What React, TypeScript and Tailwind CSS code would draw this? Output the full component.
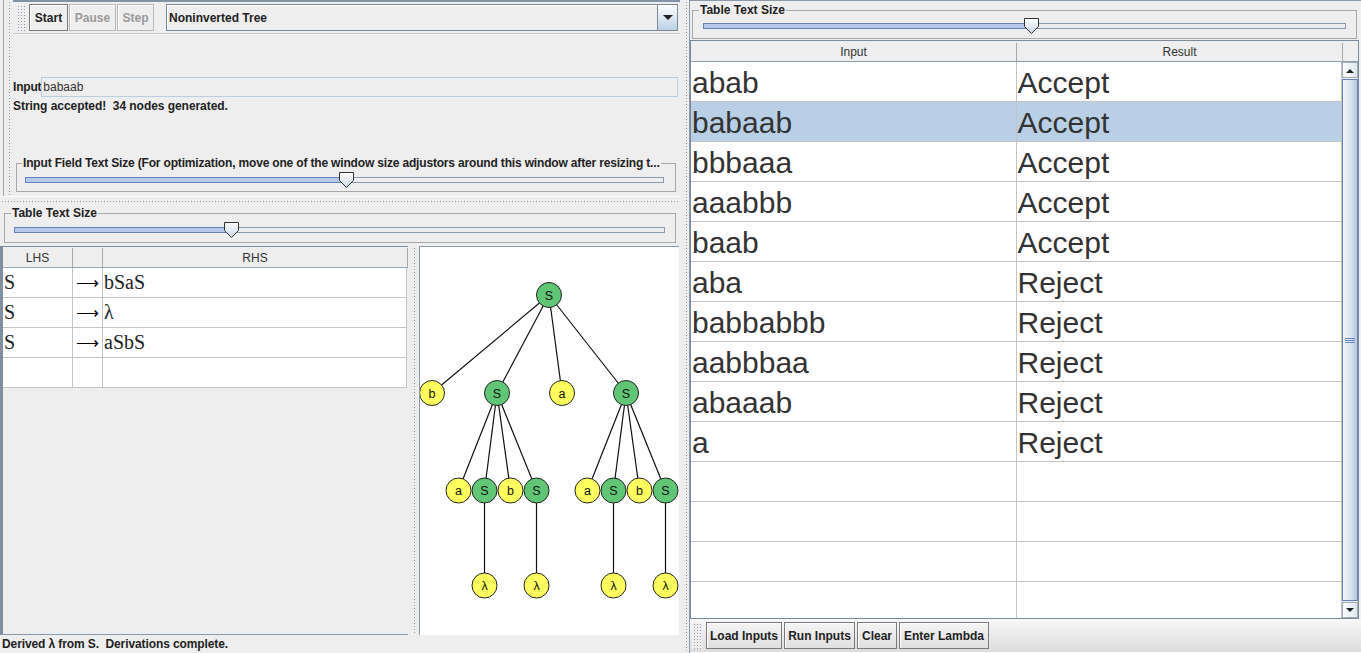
const DOTS =
  "bg-[#eeeeee] bg-[image:linear-gradient(90deg,#eeeeee_2px,transparent_2px),linear-gradient(#eeeeee_2px,#8e9cab_2px)] bg-[length:3px_3px]";

function Thumb() {
  return (
    <svg width="15" height="16" viewBox="0 0 15 16">
      <defs>
        <linearGradient id="tg" x1="0" y1="0" x2="0" y2="1">
          <stop offset="0" stopColor="#ffffff" />
          <stop offset="1" stopColor="#c9d8e8" />
        </linearGradient>
      </defs>
      <path d="M0.5 0.5 H14.5 V8.5 L7.5 15.5 L0.5 8.5 Z" fill="url(#tg)" stroke="#333333" />
    </svg>
  );
}

function Slider({ width, at }: { width: number; at: number }) {
  return (
    <div className="relative h-[16px]" style={{ width }}>
      <div className="absolute top-[4px] left-0 right-0 h-[6px] flex">
        <div className="h-full border border-[#6382bf] bg-[#b7c9e6]" style={{ width: at + 7 }} />
        <div className="h-full flex-1 border border-[#8a9aab] border-l-0 bg-[#eeeeee]" />
      </div>
      <div className="absolute top-[-1px]" style={{ left: at }}>
        <Thumb />
      </div>
    </div>
  );
}

function Btn({ label, disabled, w }: { label: string; disabled?: boolean; w: number }) {
  return (
    <div
      className={
        "h-[27px] flex items-center justify-center font-bold border shadow-[inset_1px_1px_0_#ffffff] " +
        (disabled ? "border-[#b8b8b8] text-[#999999]" : "border-[#7a7a7a] text-[#222222]")
      }
      style={{ width: w }}
    >
      {label}
    </div>
  );
}

const grammar = [
  ["S", "bSaS"],
  ["S", "λ"],
  ["S", "aSbS"],
  ["", ""],
];

const runs: [string, string][] = [
  ["abab", "Accept"],
  ["babaab", "Accept"],
  ["bbbaaa", "Accept"],
  ["aaabbb", "Accept"],
  ["baab", "Accept"],
  ["aba", "Reject"],
  ["babbabbb", "Reject"],
  ["aabbbaa", "Reject"],
  ["abaaab", "Reject"],
  ["a", "Reject"],
  ["", ""],
  ["", ""],
  ["", ""],
  ["", ""],
];

type N = { x: number; y: number; l: string };
const L2a = [458.5, 484.5, 510.5, 536.5];
const L2b = [587.5, 613.5, 639.5, 665.5];
const lab = ["a", "S", "b", "S"];

function Tree() {
  const root: N = { x: 549, y: 295, l: "S" };
  const l1: N[] = [
    { x: 432, y: 393, l: "b" },
    { x: 497, y: 393, l: "S" },
    { x: 562, y: 393, l: "a" },
    { x: 626, y: 393, l: "S" },
  ];
  const l2: N[] = [
    ...L2a.map((x, i) => ({ x, y: 490.5, l: lab[i] })),
    ...L2b.map((x, i) => ({ x, y: 490.5, l: lab[i] })),
  ];
  const l3: N[] = [484.5, 536.5, 613.5, 665.5].map((x) => ({ x, y: 585.5, l: "λ" }));
  const edges: [N, N][] = [
    ...l1.map((n) => [root, n] as [N, N]),
    ...l2.slice(0, 4).map((n) => [l1[1], n] as [N, N]),
    ...l2.slice(4).map((n) => [l1[3], n] as [N, N]),
    [l2[1], l3[0]],
    [l2[3], l3[1]],
    [l2[5], l3[2]],
    [l2[7], l3[3]],
  ];
  const all = [root, ...l1, ...l2, ...l3];
  return (
    <svg width="259" height="387" viewBox="420 247 259 387" className="block">
      {edges.map(([a, b], i) => (
        <line key={i} x1={a.x} y1={a.y} x2={b.x} y2={b.y} stroke="#111111" strokeWidth="1.2" />
      ))}
      {all.map((n, i) => (
        <g key={i}>
          <circle cx={n.x} cy={n.y} r="12.5" fill={n.l === "S" ? "#60c676" : "#ffff60"} stroke="#222222" strokeWidth="1" />
          <text
            x={n.x}
            y={n.y + 4.5}
            textAnchor="middle"
            fontSize="12.5"
            fontFamily="Liberation Sans, Arial, sans-serif"
            fill="#111111"
          >
            {n.l}
          </text>
        </g>
      ))}
    </svg>
  );
}

export default function App() {
  return (
    <div className="w-[1361px] h-[653px] flex bg-[#eeeeee] overflow-hidden font-['Liberation_Sans',Arial,sans-serif] text-[12px] text-[#333333]">
      {/* left pane */}
      <div className="w-[680px] flex flex-col">
        <div className="h-[196px] flex">
          <div className="w-[13px] flex">
            <div className="w-[3px]" />
            <div className="w-[1px] bg-[#a3a3a3]" />
            <div className="w-[3px]" />
            <div className={"w-[5px] " + DOTS} />
            <div className="w-[1px]" />
          </div>
          <div className="flex-1 flex flex-col border-t-2 border-[#8193a5]">
            <div className="h-[31px] flex items-start pt-[2px] pl-[3px]">
              <div className={"w-[10px] h-[27px] " + DOTS} />
              <div className="w-[3px]" />
              <div className="flex gap-[1px]">
                <Btn label="Start" w={39} />
                <Btn label="Pause" w={47} disabled />
                <Btn label="Step" w={37} disabled />
              </div>
              <div className="ml-[12px] w-[512px] h-[27px] flex border border-[#7a8a99] shadow-[inset_1px_1px_0_#ffffff]">
                <div className="flex-1 flex items-center pl-[2px] font-bold text-[#222222]">Noninverted Tree</div>
                <div className="w-[20px] border-l border-[#7a8a99] bg-gradient-to-b from-[#ffffff] to-[#bcd0e4] flex items-center justify-center">
                  <svg width="10" height="6" viewBox="0 0 10 6">
                    <path d="M0 0 H10 L5 5 Z" fill="#222222" />
                  </svg>
                </div>
              </div>
            </div>
            <div className="h-[2px] border-t border-[#c6c6c6] bg-[#f8f8f8]" />
            <div className="mt-[42px] flex items-center pr-[2px]">
              <span className="font-bold text-[#222222] shrink-0 tracking-[-0.2px]">Input</span>
              <div className="flex-1 h-[20px] border border-[#bccde0] flex items-center pl-[1px] text-[#333333]">babaab</div>
            </div>
            <div className="mt-[2px] h-[14px] leading-[14px] font-bold text-[#222222] whitespace-pre tracking-[-0.05px]">
              String accepted!  34 nodes generated.
            </div>
            <fieldset className="mt-[43px] ml-[3px] w-[660px] h-[36px] border border-[#a8a8a8] px-[5px]">
              <legend className="px-[1px] font-bold text-[#222222] leading-[14px] whitespace-nowrap tracking-[-0.17px]">
                Input Field Text Size (For optimization, move one of the window size adjustors around this window after resizing t...
              </legend>
              <div className="ml-[3px] mt-[3px]">
                <Slider width={639} at={314} />
              </div>
            </fieldset>
          </div>
        </div>
        {/* horizontal divider */}
        <div className="h-[10px] flex flex-col">
          <div className="h-[3px] border-t border-[#ffffff]" />
          <div className={"h-[4px] " + DOTS} />
        </div>
        <fieldset className="ml-[4px] w-[672px] h-[37px] border border-[#a8a8a8] px-[6px]">
          <legend className="px-[1px] font-bold text-[#222222] leading-[14px]">Table Text Size</legend>
          <div className="ml-[3px] mt-[3px]">
            <Slider width={651} at={210} />
          </div>
        </fieldset>
        <div className="h-[3px]" />
        {/* grammar + tree */}
        <div className="h-[389px] flex">
          <div className="w-[408px] flex flex-col border-l-[3px] border-t border-b border-[#7f8fa0] border-b-[#8a9aab]">
            <div className="h-[21px] flex border-b border-[#9aa8b5] bg-[#eeeeee] pt-[1px]">
              <div className="w-[70px] border-r border-[#a8a8a8] flex items-center justify-center">LHS</div>
              <div className="w-[30px] border-r border-[#a8a8a8]" />
              <div className="flex-1 border-r border-[#a8a8a8] flex items-center justify-center">RHS</div>
            </div>
            {grammar.map(([l, r], i) => (
              <div key={i} className="h-[30px] flex bg-white border-b border-[#c4c4c4] font-['Liberation_Serif',serif] text-[20px] text-[#222222] leading-[29px] w-[404px]">
                <div className="w-[70px] border-r border-[#c4c4c4] pl-[1px]">{l}</div>
                <div className="w-[30px] border-r border-[#c4c4c4] flex justify-end items-center pr-[3px] font-['DejaVu_Sans',sans-serif] font-extralight text-[16px] text-black">
                  {l ? "⟶" : ""}
                </div>
                <div className="flex-1 border-r border-[#c4c4c4] pl-[1px]">{r}</div>
              </div>
            ))}
            <div className="flex-1 bg-[#eeeeee]" />
          </div>
          <div className="w-[11px] flex">
            <div className="w-[4px]" />
            <div className={"w-[4px] " + DOTS} />
          </div>
          <div className="w-[260px] border-l border-t border-[#8a9aab] bg-white overflow-hidden">
            <Tree />
          </div>
        </div>
        <div className="flex-1 flex items-center pl-[2px] font-bold text-[#222222] whitespace-pre tracking-[-0.1px]">Derived λ from S.  Derivations complete.</div>
      </div>

      {/* main divider */}
      <div className="w-[10px] flex">
        <div className="w-[4px]" />
        <div className={"w-[4px] " + DOTS} />
        <div className="w-[1px]" />
        <div className="w-[1px] bg-[#8a9aab]" />
      </div>

      {/* right pane */}
      <div className="w-[671px] flex flex-col border-t border-[#8a9aab]">
        <fieldset className="ml-[2px] mt-[2px] w-[665px] h-[36px] border border-[#a8a8a8] px-[6px]">
          <legend className="px-[1px] font-bold text-[#222222] leading-[14px]">Table Text Size</legend>
          <div className="ml-[4px] mt-[2px]">
            <Slider width={643} at={321} />
          </div>
        </fieldset>
        <div className="h-[1px]" />
        <div className="w-[669px] h-[579px] border border-[#7a8a99] flex flex-col">
          <div className="h-[21px] flex border-b border-[#8f9fae] pt-[2px]">
            <div className="w-[326px] border-r border-[#a8a8a8] flex items-center justify-center">Input</div>
            <div className="w-[326px] border-r border-[#a8a8a8] flex items-center justify-center">Result</div>
            <div className="flex-1" />
          </div>
          <div className="flex-1 flex overflow-hidden">
            <div className="w-[652px] flex flex-col bg-white overflow-hidden">
              {runs.map(([a, b], i) => (
                <div
                  key={i}
                  className={
                    "h-[40px] shrink-0 flex border-b border-[#c4c4c4] text-[30px] leading-[41px] text-[#333333] " +
                    (i === 1 ? "bg-[#b8cfe5]" : "bg-white")
                  }
                >
                  <div className="w-[326px] border-r border-[#c4c4c4] pl-[1px]">{a}</div>
                  <div className="w-[326px] border-r border-[#c4c4c4] pl-[1px]">{b}</div>
                </div>
              ))}
            </div>
            <div className="w-[16px] flex flex-col bg-[#eeeeee]">
              <div className="h-[16px] border border-[#a0aab5] bg-gradient-to-r from-[#ffffff] to-[#dde6ef] flex items-center justify-center">
                <svg width="8" height="5" viewBox="0 0 8 5">
                  <path d="M0 5 H8 L4 1 Z" fill="#222222" />
                </svg>
              </div>
              <div className="flex-1 my-[1px] border border-[#6382bf] bg-gradient-to-r from-[#f2f6fa] via-[#dce6f0] to-[#b8cbe0] flex items-center justify-center">
                <svg width="10" height="5" viewBox="0 0 10 5">
                  <path d="M0 0.5 H10 M0 2.5 H10 M0 4.5 H10" stroke="#6382bf" />
                </svg>
              </div>
              <div className="h-[16px] border border-[#a0aab5] bg-gradient-to-r from-[#ffffff] to-[#dde6ef] flex items-center justify-center">
                <svg width="8" height="5" viewBox="0 0 8 5">
                  <path d="M0 0 H8 L4 4 Z" fill="#222222" />
                </svg>
              </div>
            </div>
          </div>
        </div>
        <div className="flex-1 flex items-center pl-[2px] bg-gradient-to-b from-[#f8f8f8] to-[#dcdcdc] border-b border-[#ffffff]">
          <div className={"w-[10px] h-[27px] " + DOTS} />
          <div className="w-[4px]" />
          <div className="flex gap-[2px]">
            <Btn label="Load Inputs" w={76} />
            <Btn label="Run Inputs" w={71} />
            <Btn label="Clear" w={40} />
            <Btn label="Enter Lambda" w={90} />
          </div>
        </div>
      </div>
    </div>
  );
}
